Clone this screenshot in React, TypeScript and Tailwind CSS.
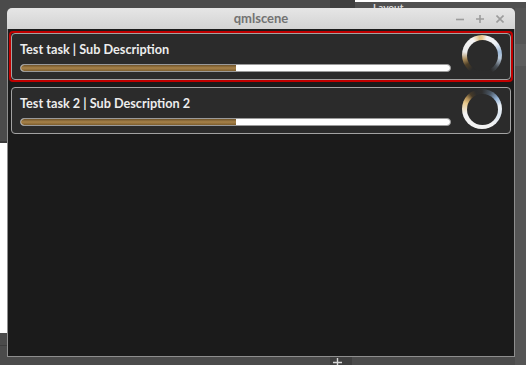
import React from "react";

type Task = {
  title: string;
  progress: number;
  selected: boolean;
  ring: string;
};

const tasks: Task[] = [
  {
    title: "Test task | Sub Description",
    progress: 50,
    selected: true,
    ring: "bg-[image:conic-gradient(#e6c68a_0deg,#f3f3f3_15deg,#eef2f6_50deg,#9db9d8_80deg,#b9c9da_100deg,#4a5158_128deg,#2b2b2b_150deg,#2b2b2b_215deg,#4e3f27_238deg,#a98a58_256deg,#ececec_280deg,#f5f5f5_330deg,#dfc084_352deg,#e6c68a_360deg)]",
  },
  {
    title: "Test task 2 | Sub Description 2",
    progress: 50,
    selected: false,
    ring: "bg-[image:conic-gradient(#2f2f2f_0deg,#4b5866_28deg,#94b3d6_55deg,#eef3f8_80deg,#dde7f1_110deg,#f3f3f3_150deg,#f3f3f3_255deg,#e8c98c_290deg,#b28f55_306deg,#463a28_322deg,#2d2d2d_340deg,#2f2f2f_360deg)]",
  },
];

const TitleButtons = () => (
  <div className="w-[60px] flex justify-end items-center gap-[12px] pr-[11px]">
    <svg width="8" height="8" viewBox="0 0 8 8">
      <path d="M0 4.5H8" stroke="#9c9c9c" strokeWidth="1.6" />
    </svg>
    <svg width="8" height="8" viewBox="0 0 8 8">
      <path d="M0 4H8M4 0V8" stroke="#9c9c9c" strokeWidth="1.6" />
    </svg>
    <svg width="8" height="8" viewBox="0 0 8 8">
      <path d="M0.5 0.5L7.5 7.5M7.5 0.5L0.5 7.5" stroke="#9c9c9c" strokeWidth="1.6" />
    </svg>
  </div>
);

const TaskCard = ({ task }: { task: Task }) => {
  return (
    <div
      className={
        task.selected
          ? "border-2 border-[#c20000] rounded-[4px]"
          : "border-2 border-transparent rounded-[4px]"
      }
    >
      <div className="h-[47px] border border-[#a3a3a3] rounded-[4px] bg-[#2b2b2b] flex pl-[8px] pr-[8px] gap-[11px]">
        <div className="flex-1 flex flex-col pt-[8px]">
          <div className="text-[12.7px] leading-[15px] font-bold text-[#ededed] whitespace-nowrap">
            {task.title}
          </div>
          <div className="mt-[7px] h-[8px] rounded-full border border-[#9a9a9a] bg-white overflow-hidden">
            <div
              className="h-full rounded-l-full bg-[image:linear-gradient(to_bottom,#6f5329,#a8834a_50%,#7c5d2e)]"
              style={{ width: `${task.progress}%` }}
            />
          </div>
        </div>
        <div
          className={`mt-[1px] w-[40px] h-[40px] rounded-full flex items-center justify-center ${task.ring}`}
        >
          <div className="w-[31px] h-[31px] rounded-full bg-[#2b2b2b]" />
        </div>
      </div>
    </div>
  );
};

const App = () => {
  return (
    <div className="w-[526px] h-[365px] bg-[#4b4b4b] relative overflow-hidden font-['Lato',sans-serif]">
      {/* desktop behind the window */}
      <div className="absolute left-0 top-[141px] w-[7px] h-[2px] bg-[#3a3a3a]" />
      <div className="absolute left-0 top-[143px] w-[7px] h-[190px] bg-white" />
      <div className="absolute left-0 top-[345px] w-[7px] h-[1px] bg-[#3c3c3c]" />
      <div className="absolute left-[330px] top-0 w-[25px] h-[8px] bg-[#3e3e3e]" />
      <div className="absolute left-[355px] top-0 w-[171px] h-[8px] bg-[#505050] border-t-2 border-white">
        <span className="absolute left-[18px] top-[-1px] text-[10px] font-bold text-[#dcdcdc] leading-[12px]">
          Layout
        </span>
      </div>
      <div className="absolute left-[515px] top-[8px] w-[11px] h-[357px] bg-[#555555]">
        <div className="mt-[36px] h-[22px] bg-[#5e5e5e]" />
      </div>
      <div className="absolute left-[330px] top-[357px] w-[22px] h-[8px] bg-[#3f3f3f]">
        <svg className="absolute left-[3px] top-[1px]" width="9" height="9" viewBox="0 0 9 9">
          <path d="M0 4.5H9M4.5 0V9" stroke="#d8d8d8" strokeWidth="1.4" />
        </svg>
      </div>

      {/* qmlscene window */}
      <div className="absolute left-[7px] top-[8px] w-[508px] h-[349px] flex flex-col">
        <div className="h-[21px] rounded-t-[5px] bg-[image:linear-gradient(to_bottom,#e6e6e6,#d3d3d3)] flex items-center">
          <div className="w-[60px]" />
          <div className="flex-1 text-center text-[13px] font-bold text-[#727272] leading-[21px]">
            qmlscene
          </div>
          <TitleButtons />
        </div>
        <div className="flex-1 bg-[#1b1b1b] border-x border-b border-[#8e8e8e] flex flex-col gap-[3px] px-[1px] pt-[2px]">
          {tasks.map((t) => (
            <TaskCard key={t.title} task={t} />
          ))}
        </div>
      </div>
    </div>
  );
};

export default App;
